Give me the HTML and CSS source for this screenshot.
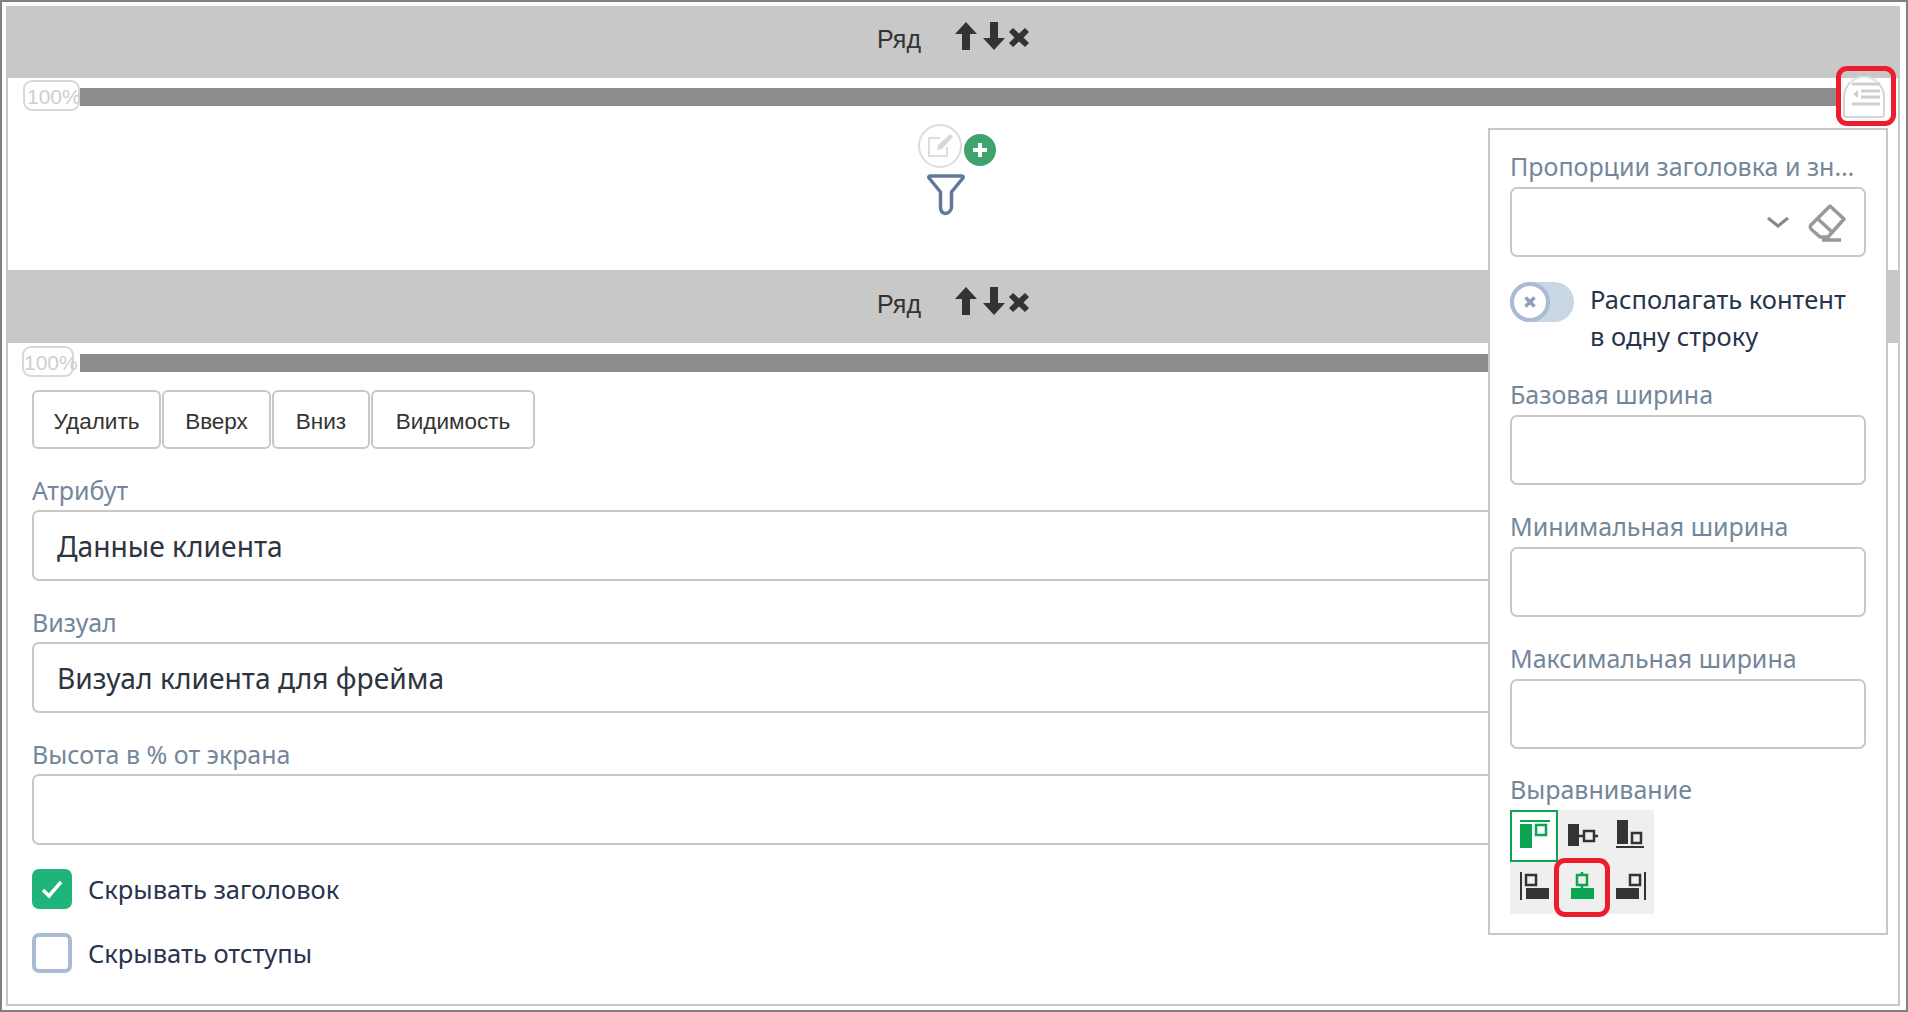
FILE: index.html
```html
<!DOCTYPE html>
<html lang="ru">
<head>
<meta charset="utf-8">
<title>Ряд</title>
<link rel="stylesheet" href="styles.css">
</head>
<body>
<div class="screen">
  <div class="frame">
    <section class="row row-first">
      <header class="row-header">
        <span class="row-title">Ряд</span>
        <span class="row-actions">
          <svg class="act" width="22" height="28" viewBox="0 0 22 28"><path d="M11 0 22 12H15V28H7V12H0Z"/></svg>
          <svg class="act" width="22" height="28" viewBox="0 0 22 28"><path d="M11 28 0 16H7V0H15V16H22Z"/></svg>
          <svg class="act act-x" width="20" height="19" viewBox="0 0 20 19"><path d="M4 0 10 5.500 16 0 20 4 14.500 9.500 20 15 16 19 10 13.500 4 19 0 15 5.500 9.500 0 4Z"/></svg>
        </span>
      </header>
      <div class="track">
        <div class="bar"></div>
        <span class="pct">100%</span>
        <span class="indent-btn">
          <svg width="30" height="30" viewBox="0 0 30 30"><path class="indent-lines" d="M1 3H29M10 10H29M10 16H29M1 23H29"/><path class="indent-arrow" d="M7 9V17L2 13Z"/></svg>
        </span>
      </div>
      <div class="row-body">
        <div class="widget">
          <div class="widget-top">
            <span class="edit-btn">
              <svg width="30" height="30" viewBox="0 0 30 30"><path class="edit-box" d="M22 16V25H4V7H15"/><path class="edit-pen" d="M12 19 13 14 25 3 28 6 17 18Z"/></svg>
            </span>
            <span class="add-btn">
              <svg width="16" height="16" viewBox="0 0 16 16"><path d="M6 1H10V6H15V10H10V15H6V10H1V6H6Z"/></svg>
            </span>
          </div>
          <svg class="funnel" width="38" height="42" viewBox="0 0 38 42"><path d="M3 2H35C36 2 36.500 3 36 4L24.500 18V33C24.500 37 21 39.500 18 39.500 15.500 39 13.500 37 13.500 33V18L2 4C1.500 3 2 2 3 2Z"/></svg>
        </div>
      </div>
    </section>

    <section class="row">
      <header class="row-header row-header-second">
        <span class="row-title">Ряд</span>
        <span class="row-actions">
          <svg class="act" width="22" height="28" viewBox="0 0 22 28"><path d="M11 0 22 12H15V28H7V12H0Z"/></svg>
          <svg class="act" width="22" height="28" viewBox="0 0 22 28"><path d="M11 28 0 16H7V0H15V16H22Z"/></svg>
          <svg class="act act-x" width="20" height="19" viewBox="0 0 20 19"><path d="M4 0 10 5.500 16 0 20 4 14.500 9.500 20 15 16 19 10 13.500 4 19 0 15 5.500 9.500 0 4Z"/></svg>
        </span>
      </header>
      <div class="track track-second">
        <div class="bar"></div>
        <span class="pct pct-second">100%</span>
      </div>
      <div class="form">
        <div class="btn-group">
          <button class="btn btn-del">Удалить</button>
          <button class="btn btn-up">Вверх</button>
          <button class="btn btn-down">Вниз</button>
          <button class="btn btn-vis">Видимость</button>
        </div>
        <div class="field field-first">
          <label class="label">Атрибут</label>
          <div class="input input-main">Данные клиента</div>
        </div>
        <div class="field field-main">
          <label class="label">Визуал</label>
          <div class="input input-main">Визуал клиента для фрейма</div>
        </div>
        <div class="field field-main">
          <label class="label">Высота в % от экрана</label>
          <div class="input input-main"></div>
        </div>
        <div class="check check-first">
          <span class="box box-on">
            <svg width="24" height="20" viewBox="0 0 24 20"><path d="M3 11 9 17 21 3"/></svg>
          </span>
          <span class="check-text">Скрывать заголовок</span>
        </div>
        <div class="check">
          <span class="box"></span>
          <span class="check-text">Скрывать отступы</span>
        </div>
      </div>
    </section>
  </div>

  <aside class="panel">
    <label class="label">Пропорции заголовка и зн…</label>
    <div class="input input-select">
      <svg class="chevron" width="24" height="12" viewBox="0 0 24 12"><path d="M2 2 12 10 22 2"/></svg>
      <svg class="eraser" width="38" height="38" viewBox="0 0 38 38"><path d="M22 2 36 15 20 33H12L3 25C2 24 2 22 3 21Z M9 14 23 27 M14 36H33"/></svg>
    </div>
    <div class="toggle-row">
      <span class="toggle">
        <span class="knob">
          <svg width="12" height="12" viewBox="0 0 12 12"><path d="M1.500 1.500 10.500 10.500M10.500 1.500 1.500 10.500"/></svg>
        </span>
      </span>
      <span class="toggle-text">Располагать контент<br>в одну строку</span>
    </div>
    <div class="field field-after-toggle">
      <label class="label">Базовая ширина</label>
      <div class="input"></div>
    </div>
    <div class="field">
      <label class="label">Минимальная ширина</label>
      <div class="input"></div>
    </div>
    <div class="field">
      <label class="label">Максимальная ширина</label>
      <div class="input"></div>
    </div>
    <div class="field field-align">
      <label class="label">Выравнивание</label>
      <div class="align-grid">
        <span class="cell cell-selected">
          <svg class="al al-on" width="48" height="52" viewBox="0 0 48 52"><path class="f" d="M10 10H40V12H10ZM10 14H22V38H10Z"/><path class="o" d="M26 15H36V25H26Z"/></svg>
        </span>
        <span class="cell">
          <svg class="al" width="48" height="52" viewBox="0 0 48 52"><path class="f" d="M10 14H21V36H10Z"/><path class="o" d="M26 21H36V31H26ZM21 26H26M36 26H40"/></svg>
        </span>
        <span class="cell">
          <svg class="al" width="48" height="52" viewBox="0 0 48 52"><path class="f" d="M11 10H22V34H11ZM10 36H38V38H10Z"/><path class="o" d="M26 23H35V33H26Z"/></svg>
        </span>
        <span class="cell">
          <svg class="al" width="48" height="52" viewBox="0 0 48 52"><path class="f" d="M10 10H12V38H10ZM16 26H39V37H16Z"/><path class="o" d="M16 13H26V23H16Z"/></svg>
        </span>
        <span class="cell">
          <svg class="al al-on" width="48" height="52" viewBox="0 0 48 52"><path class="f" d="M13 26H36V37H13Z"/><path class="o" d="M19 13H29V23H19ZM24 10V13M24 23V26"/></svg>
        </span>
        <span class="cell">
          <svg class="al" width="48" height="52" viewBox="0 0 48 52"><path class="f" d="M38 10H40V38H38ZM10 26H33V37H10Z"/><path class="o" d="M24 13H34V23H24Z"/></svg>
        </span>
      </div>
    </div>
  </aside>

  <span class="mark mark-indent"></span>
  <span class="mark mark-align"></span>
</div>
</body>
</html>
```

FILE: styles.css
```css
* { box-sizing: border-box; }

html, body { margin: 0; padding: 0; background: #fff; }

body {
  width: 1908px;
  height: 1012px;
  overflow: hidden;
  font-family: "Noto Sans", "Liberation Sans", sans-serif;
}

.screen {
  position: relative;
  width: 1908px;
  height: 1012px;
  padding: 4px;
  border: 2px solid #808080;
  background: #fff;
}

.frame {
  height: 1000px;
  width: 1894px;
  border: 2px solid #c8c8c8;
  border-top: 0;
}

.row-first { height: 264px; display: flex; flex-direction: column; }

.row-header {
  display: flex;
  align-items: center;
  justify-content: center;
  height: 72px;
  margin: 0 -2px;
  padding-bottom: 12px;
  background: #c8c8c8;
}

.row-header-second { height: 73px; padding-bottom: 11px; }

.row-title {
  width: 78px;
  font: 25px "Liberation Sans", sans-serif;
  color: #333;
  position: relative;
  top: 3px;
}

.row-actions { display: flex; align-items: center; gap: 6px; }
.act { display: block; fill: #333; }
.act-x { margin-left: -2px; margin-top: 3px; }

.track { position: relative; padding: 10px 0 0 72px; }
.track-second { padding-top: 11px; }

.bar { height: 18px; width: 1761px; background: #8c8c8c; }

.pct {
  position: absolute;
  left: 15px;
  top: 2px;
  width: 57px;
  height: 31px;
  padding-left: 2px;
  border: 2px solid #d8d8d8;
  border-radius: 9px;
  background: #fff;
  font: 21px/30px "Liberation Sans", sans-serif;
  color: #cfcfcf;
  white-space: nowrap;
}

.pct-second { left: 14px; top: 3px; width: 52px; padding-left: 0; }

.indent-btn {
  position: absolute;
  left: 1835px;
  top: -2px;
  width: 42px;
  height: 42px;
  padding: 3px 0 0 6px;
  border: 2px solid #d4d4d4;
  border-top-color: #e4e4e4;
  border-radius: 21px 21px 3px 3px;
  background: #fff;
}

.indent-btn svg { display: block; }
.indent-lines { stroke: #cfcfcf; stroke-width: 3; fill: none; }
.indent-arrow { fill: #cfcfcf; }

.row-body { flex: 1; display: flex; justify-content: center; }

.widget { margin-top: 18px; margin-left: 8px; display: flex; flex-direction: column; align-items: flex-start; }
.widget-top { display: flex; align-items: flex-end; }

.edit-btn {
  display: flex;
  align-items: center;
  justify-content: center;
  width: 44px;
  height: 44px;
  border: 2px solid #dcdcdc;
  border-radius: 50%;
  background: #fff;
}

.edit-box { fill: none; stroke: #dedede; stroke-width: 2; }
.edit-pen { fill: #d8d8d8; }

.add-btn {
  display: flex;
  align-items: center;
  justify-content: center;
  width: 32px;
  height: 32px;
  margin-left: 2px;
  margin-bottom: 2px;
  border-radius: 50%;
  background: #3fa36e;
}

.add-btn svg { fill: #fff; }

.funnel { display: block; margin: 6px 0 0 9px; }
.funnel path { fill: #fff; stroke: #60799a; stroke-width: 3.500; stroke-linejoin: round; }

.form { padding: 18px 0 0 24px; }

.btn-group { display: flex; gap: 1px; }

.btn {
  height: 59px;
  padding: 4px 0 0;
  border: 2px solid #c8c8c8;
  border-radius: 6px;
  background: #fff;
  font: 22.500px "Liberation Sans", sans-serif;
  color: #333;
}

.btn-del { width: 129px; }
.btn-up { width: 109px; }
.btn-down { width: 98px; }
.btn-vis { width: 164px; }

.field { margin-top: 26px; }
.field-first { margin-top: 25px; }
.field-main { margin-top: 25px; }

.label {
  display: block;
  height: 36px;
  font-size: 25px;
  line-height: 30px;
  color: #74879a;
  white-space: nowrap;
}

.form .label { line-height: 32px; }

.input {
  display: flex;
  align-items: center;
  height: 70px;
  padding: 0 22px;
  border: 2px solid #c8c8c8;
  border-radius: 7px;
  background: #fff;
  font-size: 28.200px;
  color: #2e3440;
}

.input-main { width: 1800px; height: 71px; padding: 0 23px; }

.check { display: flex; align-items: center; gap: 16px; margin-top: 24px; }
.check-first { margin-top: 24px; }

.box {
  display: flex;
  align-items: center;
  justify-content: center;
  width: 40px;
  height: 40px;
  border: 4px solid #a9bcd3;
  border-radius: 7px;
  background: #fff;
}

.box-on { border-color: #1fb57a; background: #1fb57a; }
.box-on svg { fill: none; stroke: #fff; stroke-width: 3.500; }

.check-text { font-size: 25.500px; color: #27344d; }

.panel {
  position: absolute;
  left: 1486px;
  top: 126px;
  width: 400px;
  height: 807px;
  padding: 21px 20px 0;
  border: 2px solid #c8c8c8;
  background: #fff;
}

.input-select { position: relative; }
.chevron { position: absolute; left: 254px; top: 27px; fill: none; stroke: #888; stroke-width: 3; }
.eraser { position: absolute; left: 296px; top: 15px; fill: none; stroke: #999; stroke-width: 3.500; stroke-linejoin: round; }

.toggle-row { display: flex; align-items: flex-start; gap: 16px; margin-top: 24px; }

.toggle {
  display: block;
  flex: none;
  width: 64px;
  height: 40px;
  margin-top: 1px;
  border-radius: 20px;
  background: #c9d6e4;
}

.knob {
  display: flex;
  align-items: center;
  justify-content: center;
  width: 40px;
  height: 40px;
  border: 4px solid #a9bcd3;
  border-radius: 50%;
  background: #fff;
}

.knob svg { fill: none; stroke: #8ca2bb; stroke-width: 3.500; }

.toggle-text { font-size: 25.500px; line-height: 37px; color: #27344d; white-space: nowrap; }

.field-after-toggle { margin-top: 24px; }
.field-align { margin-top: 25px; }

.align-grid {
  display: grid;
  grid-template-columns: repeat(3, 48px);
  grid-template-rows: repeat(2, 52px);
  width: 144px;
  background: #efefef;
}

.cell { display: block; }
.cell-selected { outline: 2px solid #0aa552; outline-offset: -2px; background: #fff; }
.cell svg { display: block; }

.al .f { fill: #333; }
.al .o { fill: none; stroke: #333; stroke-width: 2.500; }
.al-on .f { fill: #0aa552; }
.al-on .o { stroke: #0aa552; }

.mark {
  position: absolute;
  border: 5px solid #ee1c2e;
  border-radius: 11px;
}

.mark-indent { left: 1834px; top: 64px; width: 60px; height: 60px; }
.mark-align { left: 1552px; top: 856px; width: 56px; height: 59px; }
```
